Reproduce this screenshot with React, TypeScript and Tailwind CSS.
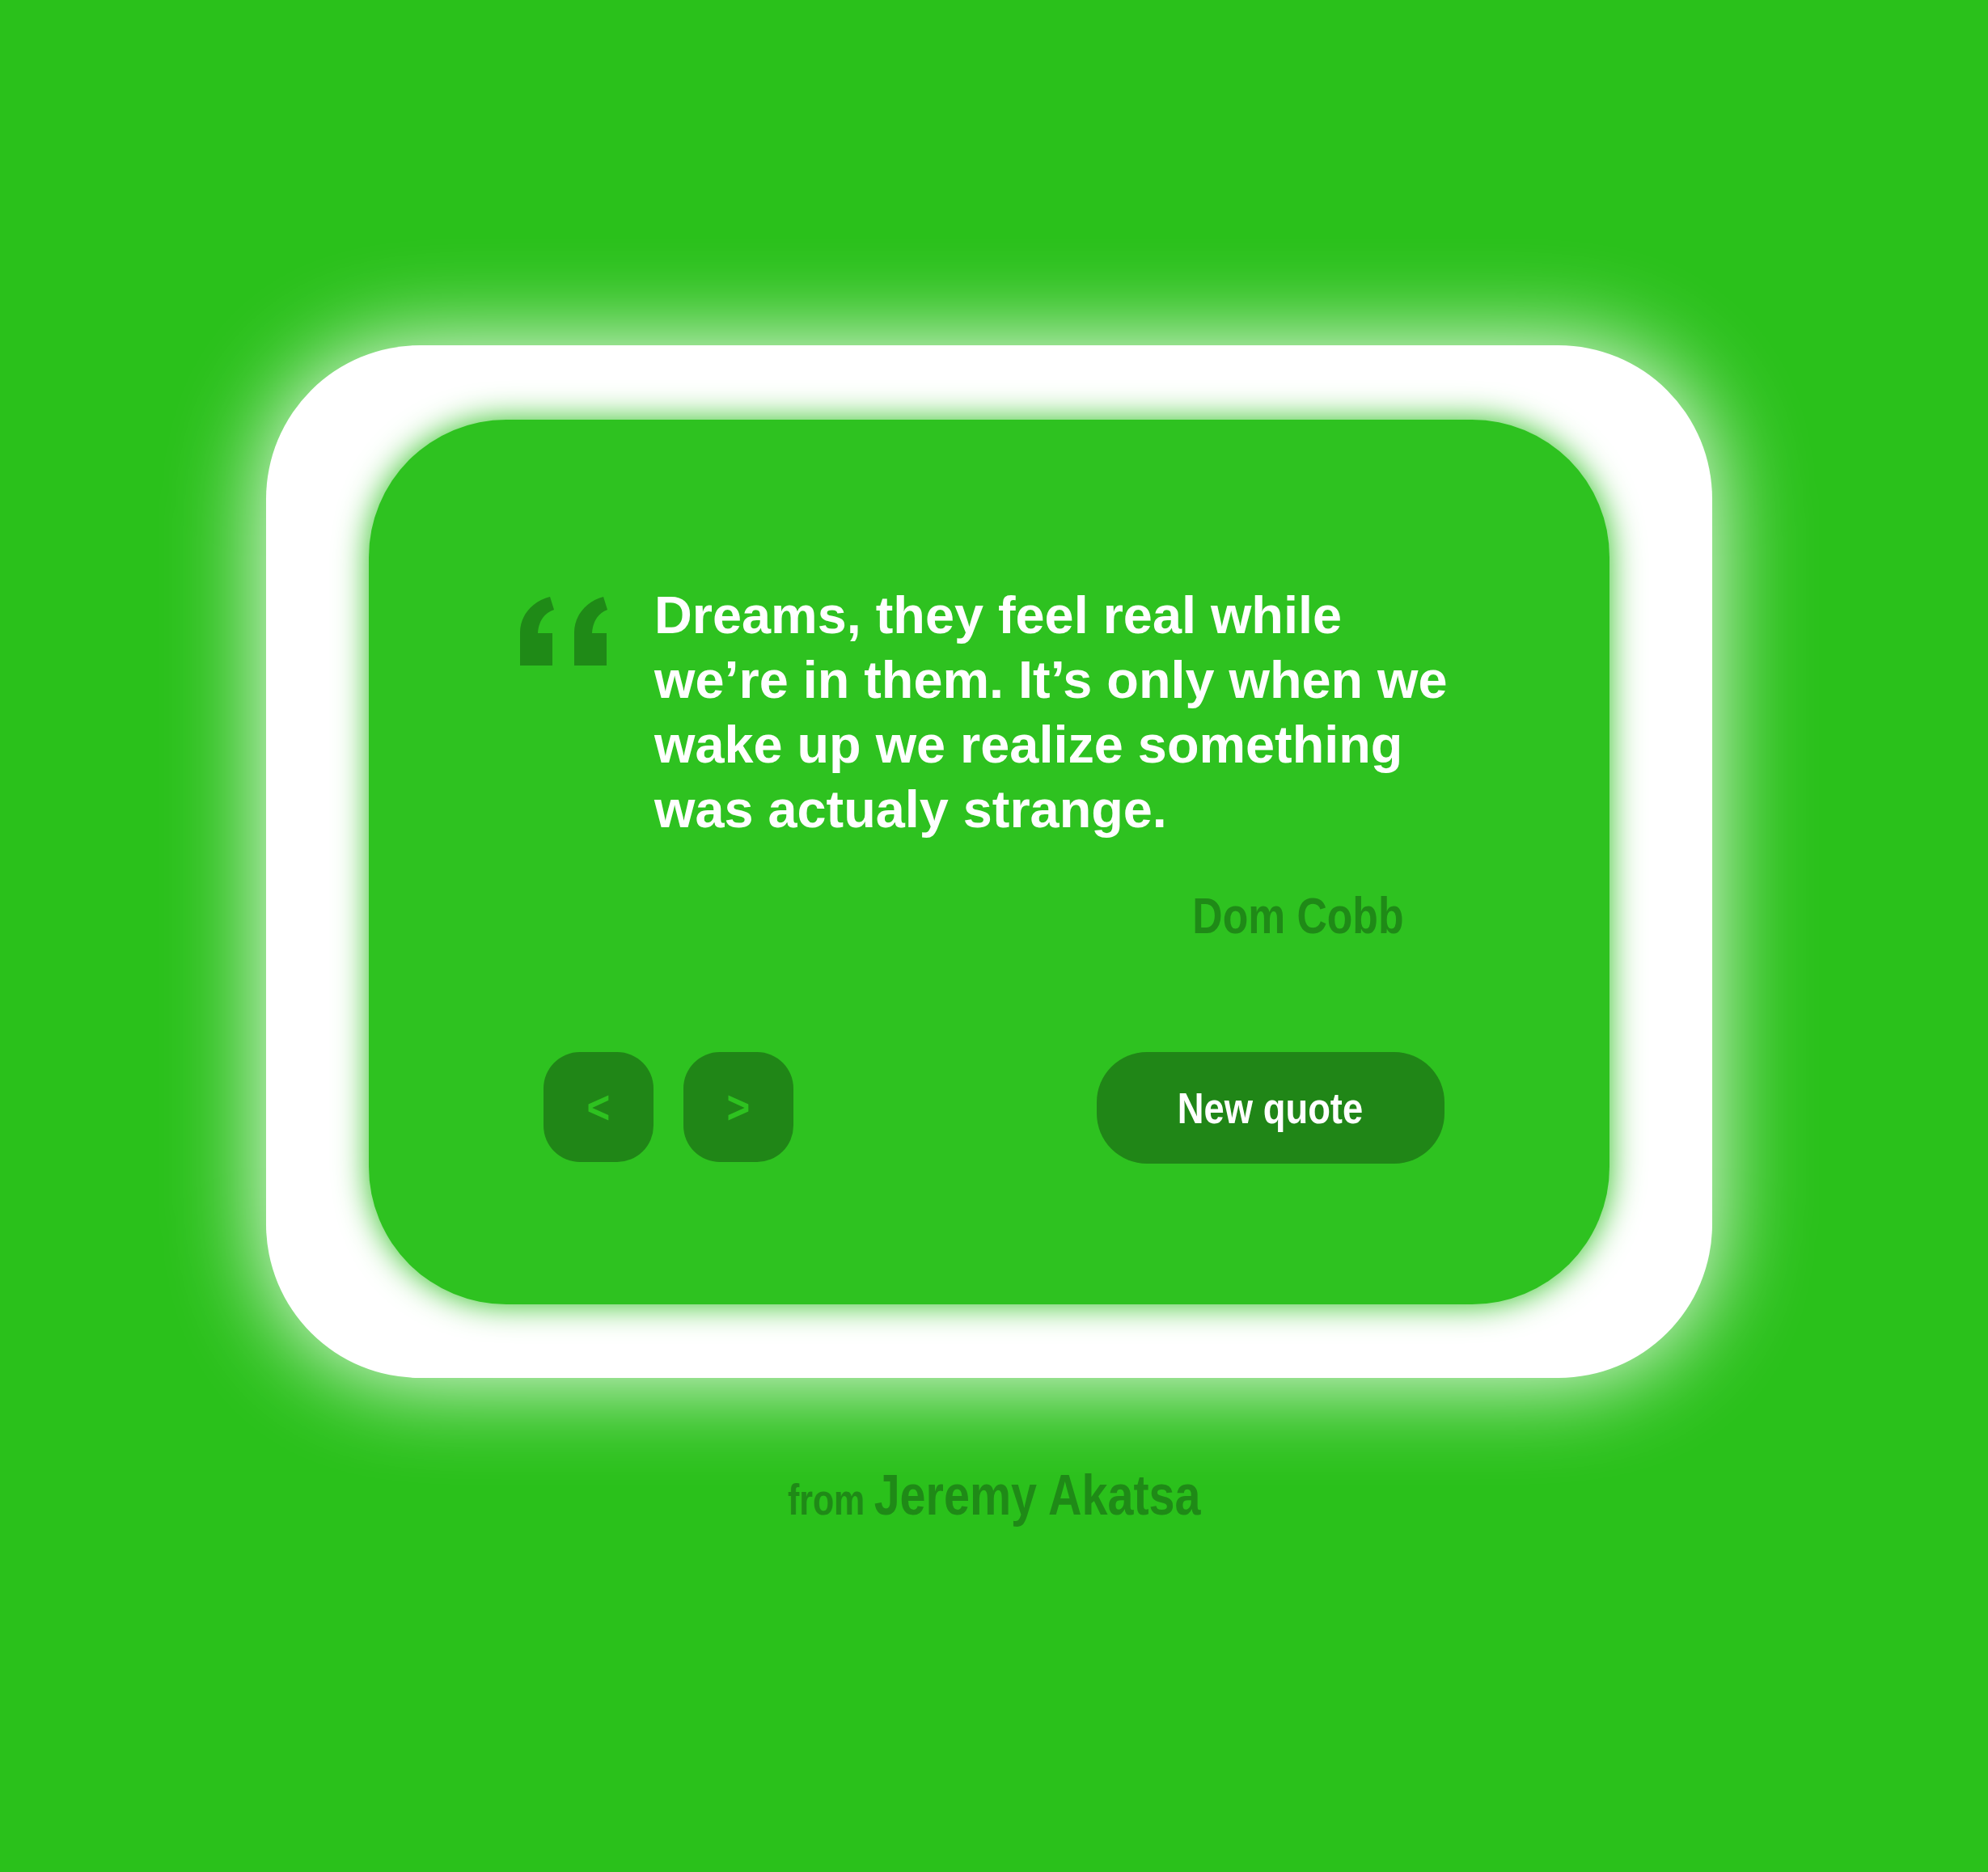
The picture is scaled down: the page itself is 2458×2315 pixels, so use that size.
import React from "react";

const sans = { fontFamily: "'Liberation Sans', Arial, sans-serif" };

function QuoteMark() {
  return (
    <svg className="mt-[17px] shrink-0" width="108" height="85" viewBox="0 0 108 85">
      <path d="M0,85 L0,44 C0,24 14,6 37,0 L42,16 C30,20 23,30 22,45 L40,45 L40,85 Z" fill="#1f8a17" />
      <path d="M67,85 L67,44 C67,24 81,6 103,0 L108,16 C97,20 90,30 89,45 L107,45 L107,85 Z" fill="#1f8a17" />
    </svg>
  );
}

export default function App() {
  return (
    <div className="min-h-[2315px] w-full bg-[#2ac11b] flex flex-col items-center pt-[427px]" style={sans}>
      <div className="mr-[12px] w-[1788px] h-[1277px] rounded-[190px] bg-white shadow-[0_0_120px_#ffffff] flex items-center justify-center">
        <div className="w-[1534px] h-[1094px] rounded-[170px] bg-[#2ec220] shadow-[0_0_40px_#2ec220] pt-[202px] pl-[187px] flex flex-col">
          <div className="flex items-start">
            <QuoteMark />
            <p className="ml-[58px] w-[1005px] text-[64.8px] leading-[80px] font-bold text-white">
              Dreams, they feel real while we’re in them. It’s only when we wake up we realize something was actualy strange.
            </p>
          </div>
          <div className="w-[1092px] mt-[60px] flex justify-end">
            <span className="inline-block origin-right scale-x-[0.82] text-[63px] leading-[62px] font-bold text-[#1f8a17]">
              Dom Cobb
            </span>
          </div>
          <div className="mt-[138px] ml-[29px] w-[1114px] flex items-start">
            <button className="w-[136px] h-[136px] rounded-[45px] bg-[#208617] flex items-center justify-center">
              <span className="inline-block scale-x-[0.85] text-[58px] leading-none font-bold text-[#2ec220]">&lt;</span>
            </button>
            <button className="ml-[37px] w-[136px] h-[136px] rounded-[45px] bg-[#208617] flex items-center justify-center">
              <span className="inline-block scale-x-[0.85] text-[58px] leading-none font-bold text-[#2ec220]">&gt;</span>
            </button>
            <button className="ml-auto w-[430px] h-[138px] rounded-[62px] bg-[#208617] flex items-center justify-center">
              <span className="inline-block scale-x-[0.84] text-[54px] leading-none font-bold text-white">New quote</span>
            </button>
          </div>
        </div>
      </div>
      <div className="mt-[109px] flex items-baseline gap-[14px] font-bold text-[#1f8a17] leading-none scale-x-[0.81]">
        <span className="text-[53px]">from</span>
        <span className="text-[71px]">Jeremy Akatsa</span>
      </div>
    </div>
  );
}
